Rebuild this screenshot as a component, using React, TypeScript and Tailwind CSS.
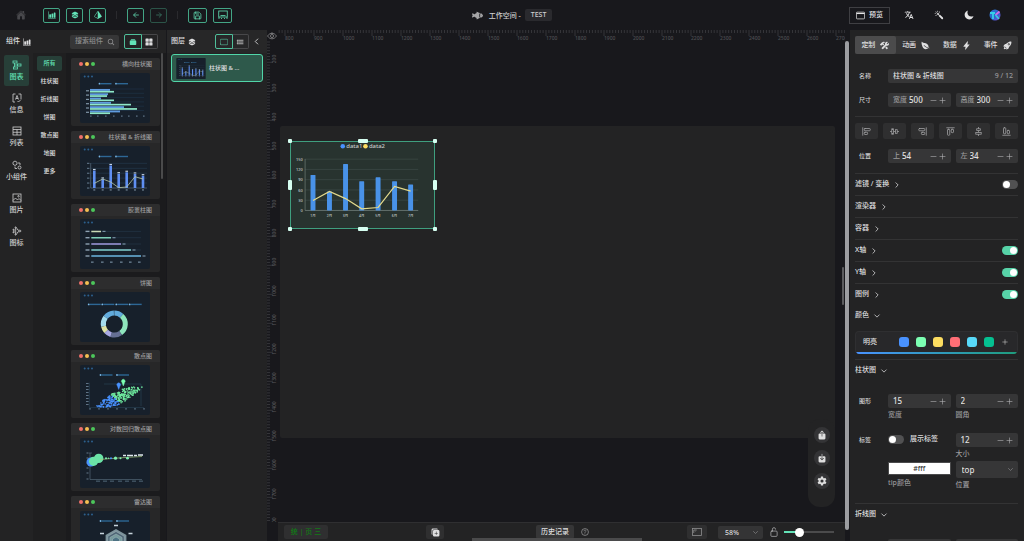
import React from "react";
import {
  IoHome, IoBarChart, IoLayers, IoPrism, IoArrowBack, IoArrowForward, IoFish, IoLanguage,
  IoColorWand, IoMoon, IoSearch, IoAlbums, IoGrid, IoTabletLandscapeOutline, IoList, IoChevronBack, IoChevronForward,
  IoChevronDown, IoConstruct, IoLeaf, IoFlash, IoRocket, IoShare, IoDownload, IoSettingsSharp, IoDuplicate,
  IoHelpCircleOutline, IoLockOpenOutline, IoAdd, IoRemove, IoEyeOutline,
} from "react-icons/io5";
import { AlignStartVertical, AlignEndVertical, AlignStartHorizontal, AlignEndHorizontal, Save } from "lucide-react";

/* ---------- shared pieces ---------- */

function Stroke({ children, size = 10 }: { children: React.ReactNode; size?: number }) {
  return (
    <svg width={size} height={size} viewBox="0 0 20 20" fill="none" stroke="currentColor" strokeWidth="1.6" aria-hidden="true">
      {children}
    </svg>
  );
}

function HeaderButton({ label, wide, dim, children }: { label: string; wide?: boolean; dim?: boolean; children: React.ReactNode }) {
  return (
    <button
      aria-label={label}
      className={`flex h-[15px] items-center justify-center rounded-[2px] border ${wide ? "w-[19px]" : "w-[17px]"} ${
        dim ? "border-[#2b5448] text-[#3b7866]" : "border-[#43a585] text-[#63e2b7]"
      }`}
    >
      {children}
    </button>
  );
}

function Switch({ label, on }: { label: string; on?: boolean }) {
  return (
    <input
      type="checkbox"
      role="switch"
      aria-label={label}
      defaultChecked={on}
      className="relative block h-[9px] w-4 shrink-0 appearance-none rounded-full bg-[#515152] before:absolute before:left-px before:top-px before:size-[7px] before:rounded-full before:bg-white checked:bg-[#57d3a8] checked:before:left-2"
    />
  );
}

function NumberField({ label, prefix, value }: { label: string; prefix?: string; value: string }) {
  return (
    <div className="flex h-[14px] min-w-0 items-center rounded-[2px] bg-[#363637] pl-[5px] pr-1">
      {prefix && <span className="mr-[2px] shrink-0 text-[#9a9a9b]">{prefix}</span>}
      <input aria-label={label} defaultValue={value} className="w-0 min-w-0 flex-1 bg-transparent text-[8px] text-[#e0e0e0] outline-none" />
      <button aria-label={`${label} -`} className="text-[#b8b8b9]"><IoRemove size={9} /></button>
      <button aria-label={`${label} +`} className="text-[#b8b8b9]"><IoAdd size={9} /></button>
    </div>
  );
}

/* ---------- header ---------- */

function Header() {
  return (
    <header className="grid h-[30px] shrink-0 grid-cols-[1fr_auto_1fr] items-center bg-[#18181c]">
      <div className="flex items-center pl-4">
        <button aria-label="主页" className="text-[#48484c]"><IoHome size={10} /></button>
        <div className="ml-[17px] flex gap-[6px]">
          <HeaderButton label="图表组件"><IoBarChart size={8} /></HeaderButton>
          <HeaderButton label="图层控制"><IoLayers size={8} /></HeaderButton>
          <HeaderButton label="详情设置"><IoPrism size={8} /></HeaderButton>
        </div>
        <span className="mx-[10px] h-2 w-px bg-[#2a2a2e]" />
        <div className="flex gap-[6px]">
          <HeaderButton label="后退"><IoArrowBack size={8} /></HeaderButton>
          <HeaderButton label="前进" dim><IoArrowForward size={8} /></HeaderButton>
        </div>
        <span className="mx-[10px] h-2 w-px bg-[#2a2a2e]" />
        <div className="flex gap-[6px]">
          <HeaderButton label="保存" wide><Save size={9} strokeWidth={2} /></HeaderButton>
          <HeaderButton label="大屏" wide>
            <Stroke>
              <rect x="1.5" y="2" width="17" height="12" />
              <path d="M2 14v4M6 17h2M12 17h2M18 14v4M5 11h10" />
            </Stroke>
          </HeaderButton>
        </div>
      </div>
      <div className="flex items-center text-[7px] leading-[11px] text-[#d0d0d1]">
        <IoFish size={11} className="mr-[6px] text-[#a5a5a7]" />
        <span>工作空间 -</span>
        <button className="ml-1 h-[12px] rounded-[2px] bg-[#2a2a2e] px-[6px] text-[7px] leading-[12px]">TEST</button>
      </div>
      <div className="flex items-center justify-end pr-[23px] text-[#e4e4e5]">
        <button className="mr-[14px] flex h-[17px] items-center gap-1 border border-[#3f3f43] px-[6px] text-[7px]">
          <Stroke size={9}><rect x="1" y="2.5" width="18" height="15" rx="1.5" /><path d="M1 5.5h18" strokeWidth="2.5" /></Stroke>
          预览
        </button>
        <div className="mr-[15px] flex items-center gap-5">
          <button aria-label="语言"><IoLanguage size={10} /></button>
          <button aria-label="主题"><IoColorWand size={10} /></button>
          <button aria-label="深色"><IoMoon size={10} /></button>
        </div>
        <button aria-label="用户">
          <svg width="12" height="12" viewBox="0 0 24 24">
            <defs>
              <linearGradient id="avatar" x1="0" y1="0" x2="1" y2="1">
                <stop offset="0" stopColor="#2f7de0" /><stop offset=".55" stopColor="#2a62c9" /><stop offset="1" stopColor="#8a4de0" />
              </linearGradient>
            </defs>
            <circle cx="12" cy="12" r="11" fill="url(#avatar)" />
            <path d="M2 8h10M8 8v12" stroke="#35d0e8" strokeWidth="3.6" fill="none" />
            <path d="M21 5l-8 7" stroke="#d26be8" strokeWidth="3.6" />
            <path d="M13 12l7 8" stroke="#3bc7e6" strokeWidth="3.6" />
          </svg>
        </button>
      </div>
    </header>
  );
}

/* ---------- chart thumbnails ---------- */

function Dashes({ xs, y, w = 11 }: { xs: number[]; y: number; w?: number }) {
  return (
    <g>
      {xs.map((x) => (
        <g key={x}>
          <rect x={x + 1} y={y - 0.7} width={w} height="1.4" fill="#2d6795" />
          <circle cx={x} cy={y} r="0.9" fill="#79b8e8" />
        </g>
      ))}
    </g>
  );
}

const comboX = [14.3, 22.7, 30.7, 38.7, 46.7, 55, 63];
const comboTop = [24.5, 33, 19.5, 27.7, 26.3, 28, 29.7];
const comboLine = [37.3, 33, 36, 41.7, 41, 30.7, 33];

function arc(from: number, to: number) {
  const p = (a: number) => {
    const r = ((a - 90) * Math.PI) / 180;
    return `${(34.3 + 11 * Math.cos(r)).toFixed(2)} ${(32 + 11 * Math.sin(r)).toFixed(2)}`;
  };
  return `M${p(from)}A11 11 0 0 1 ${p(to)}`;
}

const donut: [number, number, string][] = [
  [0, 42, "#62abdc"], [42, 145, "#8fe6bd"], [145, 197, "#656f93"], [197, 228, "#a9a9e3"],
  [228, 258, "#dfe3a4"], [258, 308, "#a5dcec"], [308, 358, "#62abdc"],
];

const cloud = Array.from({ length: 260 }, (_, i) => {
  const t = ((i * 73) % 260) / 260;
  const s = Math.sin(i * 12.9898) * 43758.5453;
  const n = s - Math.floor(s);
  const s2 = Math.sin(i * 78.233) * 12543.123;
  const m = s2 - Math.floor(s2);
  const c = t * 0.5 + m * 0.5;
  return { x: 14 + c * 49, y: 43 - c * 21 + (n - 0.5) * 14 * Math.sin(Math.PI * c), blue: c < 0.44 + (n - 0.5) * 0.2 };
}).filter((p) => p.y < 42);

const hexagon = (r: number) =>
  Array.from({ length: 6 }, (_, i) => `${(36 + r * Math.sin((i * Math.PI) / 3)).toFixed(1)},${(30 - r * Math.cos((i * Math.PI) / 3)).toFixed(1)}`).join(" ");

function Plot({ kind }: { kind: string }) {
  switch (kind) {
    case "hbar":
      return (
        <g>
          <Dashes xs={[19.5, 36]} y={10.7} />
          {[16, 20.3, 24.6, 28.9, 33.2, 37.5].map((y, i) => (
            <g key={y}>
              <path d={`M10 ${y}H64`} stroke="#24405a" strokeWidth=".4" />
              <rect x="6" y={y + 1.2} width="3" height="1.2" fill="#8096a8" />
              <rect x="10" y={y} width={[20, 18, 11, 21, 34, 30][i]} height="1.9" fill="#5f9be0" />
              <rect x="10" y={y + 1.9} width={[24, 17, 24, 41, 47, 20][i]} height="1.7" fill="#8ee8c8" />
            </g>
          ))}
          {[10, 17, 25, 33, 41, 48, 56, 63].map((x) => <rect key={x} x={x} y="42.5" width="1.6" height="1.2" fill="#5f7487" />)}
        </g>
      );
    case "combo":
      return (
        <g>
          <Dashes xs={[19.5, 36]} y={10.5} />
          {[17.3, 22.3, 27.2, 32.1, 37].map((y) => <path key={y} d={`M10.7 ${y}H67`} stroke="#2a4258" strokeWidth=".5" />)}
          {[17.3, 22.3, 27.2, 32.1, 37, 42].map((y) => <rect key={y} x="7" y={y - 0.5} width="2.4" height="1.1" fill="#5f7487" />)}
          <path d="M10.7 17V42H67" stroke="#65798b" strokeWidth=".6" fill="none" />
          {comboX.map((x, i) => (
            <g key={x}>
              <rect x={x - 1.3} y={comboTop[i]} width="2.6" height={42 - comboTop[i]} fill="#5f8ff2" />
              <rect x={x - 1.3} y={comboTop[i] - 1.6} width="2.6" height="1.1" fill="#c6d4e4" />
              <rect x={x - 1} y="43.4" width="2" height="1.1" fill="#7b8d9d" />
            </g>
          ))}
          <polyline points={comboX.map((x, i) => `${x},${comboLine[i]}`).join(" ")} fill="none" stroke="#b9c9a8" strokeWidth=".8" />
        </g>
      );
    case "capsule":
      return (
        <g>
          {[12.4, 18.7, 25, 31, 37].map((y, i) => (
            <g key={y}>
              <rect x="5.5" y={y - 0.7} width="4" height="1.4" fill="#8ea2b3" />
              <path d={`M11.3 ${y}H61`} stroke="#26394c" strokeWidth=".6" />
              <path d={`M11.3 ${y}H${21 + i * 10}`} stroke={["#c9d9b4", "#7fcfb8", "#9f98dc", "#82cfcd", "#6bb4dc"][i]} strokeWidth="1.5" />
              <rect x={22.5 + i * 10} y={y - 0.6} width="3" height="1.2" fill="#7890a4" />
            </g>
          ))}
          {[11, 21, 30, 40, 49, 58].map((x) => <rect key={x} x={x} y="42.5" width="2.6" height="1.3" fill="#6d8294" />)}
        </g>
      );
    case "pie":
      return (
        <g>
          <Dashes xs={[8.7, 22.3, 36.3, 49.7]} y={12.4} />
          {donut.map(([a, b, c]) => <path key={a} d={arc(a, b)} stroke={c} strokeWidth="5" fill="none" />)}
        </g>
      );
    case "scatter":
      return (
        <g>
          <Dashes xs={[20.5, 37]} y={10} />
          <path d="M9.3 17.6V42.6H64M24 19H61V41" stroke="#2f4c63" strokeWidth=".5" fill="none" />
          {[18, 21, 24, 27, 30, 33, 36, 39].map((y) => <rect key={y} x="6" y={y} width="2.6" height="1" fill="#5f7487" />)}
          {[9, 18, 27, 36, 45, 54, 63].map((x) => <rect key={x} x={x} y="43.4" width="2" height="1" fill="#5f7487" />)}
          {cloud.map((p, i) => <circle key={i} cx={p.x} cy={p.y} r=".8" fill={p.blue ? "#4992ff" : "#6fea9f"} />)}
          <path d="M43.3 21l-1.3-3.4a1.9 1.9 0 1 1 2.6 0z" fill="#7cffb2" stroke="#7cffb2" strokeWidth=".4" />
          <path d="M38.7 24.5l-1.3-3.4a1.9 1.9 0 1 1 2.6 0z" fill="#4992ff" stroke="#4992ff" strokeWidth=".4" />
        </g>
      );
    case "log":
      return (
        <g>
          <path d="M10 15V41.5H62M9 15h3" stroke="#5b7082" strokeWidth=".6" fill="none" />
          {[15, 20, 25, 30, 35, 41].map((y) => <rect key={y} x="6.5" y={y - 0.5} width="2" height="1" fill="#65798b" />)}
          {[16, 23, 30, 38, 45, 52, 59].map((x) => <rect key={x} x={x} y="42.6" width="4" height="1.1" fill="#4d6172" />)}
          <circle cx="11" cy="24" r="4.5" fill="#4992ff" />
          <circle cx="13.6" cy="23.3" r="4.6" fill="#6be3a6" />
          <circle cx="18.7" cy="20.4" r="4.7" fill="#6be3a6" />
          <path d="M20 21.5Q35 20 62 18.5" stroke="#a5c97c" strokeWidth=".7" fill="none" />
          {[26, 28.5, 31, 35.5, 40.5, 47.5].map((x, i) => <circle key={x} cx={x} cy="20.2" r={[1, 0.7, 1, 1.6, 1, 1.4][i]} fill={i === 2 ? "#4992ff" : "#7ff0b0"} />)}
          <path d="M43 17.5h3m1 0h6m1 0h3m1-.5h5" stroke="#dfe8ee" strokeWidth="1.5" />
        </g>
      );
    default:
      return (
        <g>
          <Dashes xs={[20.5, 37]} y={10} />
          <polygon points={hexagon(12)} fill="#7d939b" />
          <polygon points={hexagon(9.5)} fill="#4d6474" stroke="#a4b6bc" strokeWidth=".5" />
          <polygon points={hexagon(7)} fill="#769a9c" stroke="#a4b6bc" strokeWidth=".5" />
          <polygon points={hexagon(4)} fill="#4d7283" stroke="#a4b6bc" strokeWidth=".5" />
          <path d="M34 14.5h4M20 22.5h4M48.5 22.5h4" stroke="#c7d3dc" strokeWidth="1.3" />
        </g>
      );
  }
}

function Thumb({ kind }: { kind: string }) {
  return (
    <svg viewBox="0 0 70 50" className="block h-full w-full">
      <rect width="70" height="50" rx="2" fill="#17202b" />
      {[4.7, 8.3, 12].map((x) => <circle key={x} cx={x} cy="3.4" r="1" fill="#2c5f8c" />)}
      <Plot kind={kind} />
    </svg>
  );
}

/* ---------- component library ---------- */

const rail: { name: string; icon: React.ReactNode }[] = [
  { name: "图表", icon: <><rect x="2" y="2" width="8" height="4" /><rect x="11" y="8" width="7" height="4" /><rect x="3" y="14" width="8" height="4" /><path d="M5 6v8M5 10h6" /></> },
  { name: "信息", icon: <><path d="M7 2H2v16h4M13 2h5v10M7 13l3-8 3 8M8 11h4M11 16l2 2 5-5" /></> },
  { name: "列表", icon: <><rect x="2" y="2" width="16" height="16" /><path d="M2 7h16M2 12.5h16M10 7v11" /></> },
  { name: "小组件", icon: <><path d="M6 2l4 2.500v4L6 11 2 8.500v-4z" /><circle cx="15" cy="15" r="3" /><path d="M12 6h4v4M6 13v4h4" /></> },
  { name: "图片", icon: <><rect x="2" y="2" width="16" height="16" /><path d="M2 15l5-5 4 4 3-3 4 4" /><circle cx="13" cy="6.5" r="1.5" /></> },
  { name: "图标", icon: <path d="M18 10c0-1-1-1.500-2-1.500h-4L8 2H6l2 6.500H5L3 6H2l1 4-1 4h1l2-2.500h3L6 18h2l4-6.500h4c1 0 2-.5 2-1.500z" /> },
];
const groups = ["所有", "柱状图", "折线图", "饼图", "散点图", "地图", "更多"];
const cards = [
  ["横向柱状图", "hbar"], ["柱状图 & 折线图", "combo"], ["胶囊柱图", "capsule"], ["饼图", "pie"],
  ["散点图", "scatter"], ["对数回归散点图", "log"], ["雷达图", "radar"],
];

function Library() {
  return (
    <aside className="flex w-[167px] shrink-0 flex-col border-r border-[#18181c] bg-[#232324]">
      <div className="flex h-[23px] shrink-0 items-center pl-[6px] pr-2 text-[7px]">
        <h2 className="flex items-center gap-[3px]">组件 <IoBarChart size={8} /></h2>
        <label className="ml-auto flex h-[14px] w-[49px] items-center rounded-[2px] bg-[#363637] pl-[5px] pr-1 text-[#8b8b8c]">
          <input aria-label="搜索组件" placeholder="搜索组件" className="w-0 flex-1 bg-transparent outline-none placeholder:text-[#8b8b8c]" />
          <IoSearch size={8} />
        </label>
        <div className="ml-[5px] flex h-[15px] w-[34px]">
          <button aria-label="卡片" className="flex flex-1 items-center justify-center rounded-l-[2px] border border-[#4fbf9a] text-[#63e2b7]"><IoAlbums size={8} /></button>
          <button aria-label="网格" className="flex flex-1 items-center justify-center rounded-r-[2px] border border-l-0 border-[#48484a]"><IoGrid size={8} /></button>
        </div>
      </div>
      <div className="flex min-h-0 flex-1">
        <nav className="w-[33px] shrink-0 pl-1 pt-[2px]">
          <div className="flex h-[198px] flex-col justify-between text-[7px] leading-[10px]">
            {rail.map((r, i) => (
              <a key={r.name} href="#" className={`flex h-[31px] w-[25px] flex-col items-center justify-center gap-[2px] whitespace-nowrap rounded-[2px] ${i === 0 ? "bg-[#273f38] text-[#63e2b7]" : "text-[#cfcfd0]"}`}>
                <Stroke>{r.icon}</Stroke>
                {r.name}
              </a>
            ))}
          </div>
        </nav>
        <nav className="flex w-[33px] shrink-0 flex-col items-center gap-[3px] bg-[#1f1f20] pt-[3px] text-[6px]">
          {groups.map((g, i) => (
            <a key={g} href="#" className={`h-[15px] w-[25px] rounded-[2px] text-center leading-[15px] ${i === 0 ? "bg-[#273f38] text-[#63e2b7]" : "text-[#dcdcdd]"}`}>{g}</a>
          ))}
        </nav>
        <div className="relative flex min-w-0 flex-1 flex-col gap-[5px] overflow-hidden bg-[#1b1b1d] pl-[5px] pr-[6px] pt-[5px]">
          {cards.map(([name, kind]) => (
            <article key={name} className="h-[68px] shrink-0 overflow-hidden rounded-[2px] bg-[#272728]">
              <div className="flex h-3 items-center gap-[2px] bg-[#2d2d2e] pl-2 pr-2">
                <i className="size-1 rounded-full bg-[#f0706a]" />
                <i className="size-1 rounded-full bg-[#f5bf52]" />
                <i className="size-1 rounded-full bg-[#4cc65a]" />
                <h3 className="ml-auto text-[6px] leading-[12px] text-[#9c9c9d]">{name}</h3>
              </div>
              <div className="ml-[9px] mt-[3px] h-[50px] w-[70px]"><Thumb kind={kind} /></div>
            </article>
          ))}
          <i className="absolute right-[3px] top-0 h-[126px] w-[2px] rounded-full bg-[#4a4a4b]" />
        </div>
      </div>
    </aside>
  );
}

function Layers() {
  return (
    <aside className="flex w-[100px] shrink-0 flex-col bg-[#232324]">
      <div className="flex h-[23px] shrink-0 items-center bg-[#272728] pl-1 pr-[6px] text-[7px]">
        <h2 className="flex items-center gap-[3px]">图层 <IoLayers size={8} /></h2>
        <div className="ml-auto flex h-[15px] w-[34px]">
          <button aria-label="缩略图" className="flex flex-1 items-center justify-center rounded-l-[2px] border border-[#4fbf9a] text-[#63e2b7]"><IoTabletLandscapeOutline size={8} /></button>
          <button aria-label="列表" className="flex flex-1 items-center justify-center rounded-r-[2px] border border-l-0 border-[#48484a]"><IoList size={8} /></button>
        </div>
        <button aria-label="收起" className="ml-[3px]"><IoChevronBack size={9} /></button>
      </div>
      <button className="mx-1 mt-px flex h-[28px] items-center gap-[3px] rounded-[3px] border border-[#51d6a9] bg-[#2e594b] pl-1 text-[6px]">
        <span className="h-[21px] w-[30px]"><Thumb kind="combo" /></span>
        柱状图 &amp; …
      </button>
    </aside>
  );
}

/* ---------- canvas ---------- */

function RulerX() {
  return (
    <svg className="absolute left-[11px] top-0 h-3 w-full" aria-hidden="true">
      {Array.from({ length: 230 }, (_, i) => (
        <path key={i} d={`M${(1.2 + i * 2.9).toFixed(1)} 0v${i % 10 === 2 ? 6 : 3}`} stroke="#3d3d41" strokeWidth=".8" />
      ))}
      {Array.from({ length: 20 }, (_, i) => (
        <text key={i} x={7 + i * 29} y="10" fontSize="5" fill="#4e4e52">{800 + i * 100}</text>
      ))}
    </svg>
  );
}

function RulerY() {
  return (
    <svg className="absolute left-0 top-[11px] h-full w-3" aria-hidden="true">
      {Array.from({ length: 190 }, (_, i) => (
        <path key={i} d={`M0 ${(1 + i * 2.9).toFixed(1)}h${i % 10 === 7 ? 6 : 3}`} stroke="#3d3d41" strokeWidth=".8" />
      ))}
      {Array.from({ length: 17 }, (_, i) => (
        <text key={i} transform={`translate(9 ${18 + i * 29}) rotate(-90)`} textAnchor="middle" fontSize="5" fill="#56565a">{200 + i * 100}</text>
      ))}
    </svg>
  );
}

const barX = [22.3, 39, 55.3, 71.7, 88.3, 105, 121.3];
const barTop = [33.3, 50, 22.3, 39.7, 35.7, 39.7, 43];
const lineY = [59.3, 50, 57.3, 67.7, 66.3, 45, 49.7];

function ChartWidget() {
  return (
    <div className="absolute left-[23px] top-[111px] h-[88px] w-[145px] border border-[#3f9f7f] bg-[#28332f]">
      <svg viewBox="0 0 145 87" className="block h-full w-full">
        {[0, 1, 2, 3, 4, 5].map((i) => (
          <g key={i}>
            <path d={`M14.3 ${17.3 + i * 10.4}H129`} stroke={i === 5 ? "#8b9a95" : "#43504c"} strokeWidth=".6" />
            <text x="12" y={19 + i * 10.4} textAnchor="end" fontSize="4" fill="#c5cbc9">{150 - i * 30}</text>
          </g>
        ))}
        <path d="M14.3 17V69.3" stroke="#7b8a85" strokeWidth=".6" />
        {barX.map((x, i) => (
          <g key={x}>
            <rect x={x - 2.5} y={barTop[i]} width="5" height={69.3 - barTop[i]} rx=".6" fill="#4992e8" />
            <text x={x} y="75.5" textAnchor="middle" fontSize="3.5" fill="#c5cbc9">{i + 1}月</text>
          </g>
        ))}
        <polyline points={barX.map((x, i) => `${x},${lineY[i]}`).join(" ")} fill="none" stroke="#e3d98c" strokeWidth="1.2" />
        <circle cx="52.5" cy="4.3" r="2.3" fill="#4992ff" />
        <text x="56" y="6.4" fontSize="6" fill="#c5cbc9">data1</text>
        <circle cx="75.5" cy="4.3" r="2.3" fill="#fddd60" />
        <text x="79" y="6.4" fontSize="6" fill="#c5cbc9">data2</text>
      </svg>
      <i className="absolute -left-[3px] -top-[3px] size-1 rounded-[1px] bg-[#d6fff1]" />
      <i className="absolute -right-[3px] -top-[3px] size-1 rounded-[1px] bg-[#d6fff1]" />
      <i className="absolute -bottom-[3px] -left-[3px] size-1 rounded-[1px] bg-[#d6fff1]" />
      <i className="absolute -bottom-[3px] -right-[3px] size-1 rounded-[1px] bg-[#d6fff1]" />
      <i className="absolute -top-[3px] left-[67px] h-1 w-[10px] rounded-[1px] bg-[#d6fff1]" />
      <i className="absolute -bottom-[3px] left-[67px] h-1 w-[10px] rounded-[1px] bg-[#d6fff1]" />
      <i className="absolute -left-[3px] top-[38px] h-[10px] w-1 rounded-[1px] bg-[#d6fff1]" />
      <i className="absolute -right-[3px] top-[38px] h-[10px] w-1 rounded-[1px] bg-[#d6fff1]" />
    </div>
  );
}

function Workspace() {
  return (
    <main className="flex min-w-0 flex-1 bg-[#18181c]">
      <div className="relative flex min-w-0 flex-1 flex-col overflow-hidden">
        <div className="relative min-h-0 flex-1 overflow-hidden">
          <RulerX />
          <RulerY />
          <IoEyeOutline size={10} className="absolute left-0 top-px bg-[#18181c] text-[#a8a8aa]" />
          <div className="absolute left-[13px] right-[10px] top-24 h-[312px] rounded-[2px] bg-[#232324]" />
          <ChartWidget />
          <div className="absolute bottom-[15px] right-[10px] flex w-[27px] flex-col items-center gap-[7px] rounded-[12px] bg-[#232324] pb-[18px] pt-2 text-[#dedede]">
            <button aria-label="导出" className="flex size-4 items-center justify-center rounded-full bg-[#343436]"><IoShare size={10} /></button>
            <button aria-label="导入" className="flex size-4 items-center justify-center rounded-full bg-[#343436]"><IoDownload size={10} /></button>
            <button aria-label="设置" className="flex size-4 items-center justify-center rounded-full bg-[#343436]"><IoSettingsSharp size={10} /></button>
          </div>
          <i className="absolute right-px top-[237px] h-[38px] w-[2px] rounded-full bg-[#5b5b5e]" />
        </div>
        <footer className="relative ml-[11px] flex h-[19px] shrink-0 items-center border-t border-[#2f2f31] bg-[#232324] pl-[6px] pr-[11px] text-[7px]">
          <div className="flex flex-[11] items-center justify-between">
            <button className="h-[14px] w-11 rounded-[2px] bg-[#2f2f30] text-[#117a16]">统 | 页 三</button>
            <button aria-label="复制" className="mr-[92px] flex h-[14px] w-[18px] items-center justify-center rounded-[2px] bg-[#2f2f30]"><IoDuplicate size={9} /></button>
          </div>
          <div className="flex flex-[13] items-center">
            <button className="h-[14px] whitespace-nowrap rounded-[2px] bg-[#363637] px-[5px]">历史记录</button>
            <IoHelpCircleOutline size={10} className="ml-[6px] text-[#a9a9aa]" />
            <button aria-label="快捷键" className="ml-auto flex h-[14px] w-5 items-center justify-center rounded-[2px] bg-[#2f2f30] text-[#8d8d8e]">
              <Stroke><rect x="1" y="3" width="18" height="14" /><path d="M3.5 12V6h6M6 8.5h1" /></Stroke>
            </button>
            <div className="relative ml-[11px]">
              <select aria-label="缩放" className="block h-[13px] w-[45px] appearance-none rounded-[2px] bg-[#343435] pl-[7px] text-[7px] leading-[13px] text-[#dcdcdd]"><option>58%</option></select>
              <IoChevronDown size={7} className="pointer-events-none absolute right-1 top-[3px] text-[#8d8d8e]" />
            </div>
            <button aria-label="锁定缩放" className="ml-[6px] text-[#c9c9ca]"><IoLockOpenOutline size={10} /></button>
            <input
              type="range"
              aria-label="缩放比例"
              defaultValue={26}
              className="ml-[5px] h-[9px] w-[50px] appearance-none bg-[linear-gradient(90deg,#63e2b7_30%,#4b4b4c_30%)] bg-[length:100%_2px] bg-center bg-no-repeat [&::-webkit-slider-thumb]:size-[9px] [&::-webkit-slider-thumb]:appearance-none [&::-webkit-slider-thumb]:rounded-full [&::-webkit-slider-thumb]:bg-white"
            />
          </div>
          <i className="absolute bottom-0 left-[194px] h-[3px] w-[170px] bg-[#4a4a4b]" />
        </footer>
      </div>
      <div className="w-1 shrink-0 pb-[11px] pt-[11px]"><div className="h-full rounded-full bg-[#9c9da1]" /></div>
    </main>
  );
}

/* ---------- settings ---------- */

const tabs: [string, React.ReactNode][] = [
  ["定制", <IoConstruct size={9} />], ["动画", <IoLeaf size={9} />], ["数据", <IoFlash size={9} />], ["事件", <IoRocket size={9} />],
];
const aligns: [string, React.ReactNode][] = [
  ["左对齐", <AlignStartVertical size={9} />],
  ["水平居中", <Stroke size={9}><rect x="4" y="4" width="4" height="12" /><rect x="12" y="6" width="4" height="8" /><path d="M0 10h4M8 10h4M16 10h4" /></Stroke>],
  ["右对齐", <AlignEndVertical size={9} />],
  ["顶部对齐", <AlignStartHorizontal size={9} />],
  ["垂直居中", <Stroke size={9}><rect x="6" y="4" width="8" height="4" /><rect x="4" y="12" width="12" height="4" /><path d="M10 0v4M10 8v4M10 16v4" /></Stroke>],
  ["底部对齐", <AlignEndHorizontal size={9} />],
];
const sections: { name: string; state?: "on" | "off"; open?: boolean }[] = [
  { name: "滤镜 / 变换", state: "off" }, { name: "渲染器" }, { name: "容器" }, { name: "X轴", state: "on" },
  { name: "Y轴", state: "on" }, { name: "图例", state: "on" }, { name: "颜色", open: true },
];

function Row({ label, children }: { label: string; children: React.ReactNode }) {
  return (
    <div className="grid grid-cols-[28px_1fr_1fr] gap-x-[5px]">
      <span className="pl-1 text-[6px] leading-[14px] text-[#d0d0d1]">{label}</span>
      {children}
    </div>
  );
}

function Field({ caption, children }: { caption: string; children: React.ReactNode }) {
  return (
    <div className="flex min-w-0 flex-col gap-px">
      {children}
      <span className="leading-[11px] text-[#98989a]">{caption}</span>
    </div>
  );
}

function Settings() {
  return (
    <aside className="flex w-[175px] shrink-0 flex-col overflow-hidden border-l border-[#18181c] bg-[#232324] pl-[5px] pr-[6px] pt-[6px] text-[7px]">
      <div role="tablist" className="flex h-[18px] shrink-0 rounded-[2px] bg-[#353536]">
        {tabs.map(([name, icon], i) => (
          <button key={name} role="tab" aria-selected={i === 0} className={`flex flex-1 items-center justify-center gap-[5px] rounded-[2px] ${i === 0 ? "bg-[#4b4b4c]" : ""}`}>
            {name} {icon}
          </button>
        ))}
      </div>
      <div className="mt-[15px] flex flex-col gap-[10px]">
        <Row label="名称">
          <label className="col-span-2 flex h-[14px] items-center rounded-[2px] bg-[#363637] px-[5px]">
            <input aria-label="名称" defaultValue="柱状图 & 折线图" className="min-w-0 flex-1 bg-transparent outline-none" />
            <span className="text-[#98989a]">9 / 12</span>
          </label>
        </Row>
        <Row label="尺寸">
          <NumberField label="宽度" prefix="宽度" value="500" />
          <NumberField label="高度" prefix="高度" value="300" />
        </Row>
      </div>
      <hr className="mt-[9px] border-[#333334]" />
      <div className="mt-[6px] flex justify-between">
        {aligns.map(([name, icon]) => (
          <button key={name} aria-label={name} className="flex h-4 w-[23px] items-center justify-center rounded-[2px] bg-[#2f2f30] text-[#a8a8aa]">{icon}</button>
        ))}
      </div>
      <div className="mt-[10px]">
        <Row label="位置">
          <NumberField label="上" prefix="上" value="54" />
          <NumberField label="左" prefix="左" value="34" />
        </Row>
      </div>
      <hr className="mt-[10px] border-[#333334]" />
      <div className="flex h-[152px] shrink-0 flex-col">
        {sections.map((s, i) => (
          <div key={s.name} className={`flex flex-1 items-center justify-between ${i < 5 ? "border-b border-[#333334]" : ""}`}>
            <button className="flex items-center gap-1">
              {s.name} {s.open ? <IoChevronDown size={8} /> : <IoChevronForward size={8} />}
            </button>
            {s.state && <Switch label={s.name} on={s.state === "on"} />}
          </div>
        ))}
      </div>
      <div className="mt-[5px] flex h-[23px] shrink-0 flex-col overflow-hidden rounded-[4px] border border-b-0 border-[#2f2f31] bg-[#28282a]">
        <div className="flex flex-1 items-center pl-[7px] pr-2">
          <span className="mr-auto">明亮</span>
          <div className="flex gap-[7px]">
            <i className="size-[10px] rounded-[3px] bg-[#4992ff]" />
            <i className="size-[10px] rounded-[3px] bg-[#7cffb2]" />
            <i className="size-[10px] rounded-[3px] bg-[#fddd60]" />
            <i className="size-[10px] rounded-[3px] bg-[#ff6e76]" />
            <i className="size-[10px] rounded-[3px] bg-[#58d9f9]" />
            <i className="size-[10px] rounded-[3px] bg-[#05c091]" />
          </div>
          <button aria-label="添加颜色" className="ml-[7px]"><IoAdd size={8} /></button>
        </div>
        <div className="h-[2px] bg-linear-to-r from-[#4992ff] to-[#1f9c7c]" />
      </div>
      <hr className="mt-[5px] border-[#333334]" />
      <button className="flex h-[21px] shrink-0 items-center gap-1">柱状图 <IoChevronDown size={8} /></button>
      <div className="mt-[13px] flex flex-col gap-[13px]">
        <Row label="图形">
          <Field caption="宽度"><NumberField label="图形宽度" value="15" /></Field>
          <Field caption="圆角"><NumberField label="圆角" value="2" /></Field>
        </Row>
        <Row label="标签">
          <div className="flex min-w-0 flex-col">
            <label className="flex h-[13px] items-center gap-[6px] whitespace-nowrap"><Switch label="展示标签" /> 展示标签</label>
            <input aria-label="tip颜色" defaultValue="#fff" className="mt-4 h-[13px] w-full border border-[#4b4b4c] bg-white text-center text-[7px] text-[#333]" />
            <span className="mt-[2px] leading-[11px] text-[#98989a]">tip颜色</span>
          </div>
          <div className="flex min-w-0 flex-col gap-[2px]">
            <Field caption="大小"><NumberField label="大小" value="12" /></Field>
            <Field caption="位置">
              <div className="relative">
                <select aria-label="标签位置" className="block h-[17px] w-full appearance-none rounded-[2px] bg-[#363637] pl-[6px] text-[8px]"><option>top</option></select>
                <IoChevronDown size={7} className="pointer-events-none absolute right-1 top-[5px] text-[#8d8d8e]" />
              </div>
            </Field>
          </div>
        </Row>
      </div>
      <hr className="mt-[13px] border-[#333334]" />
      <button className="flex h-[21px] shrink-0 items-center gap-1">折线图 <IoChevronDown size={8} /></button>
      <div className="mt-[14px] grid grid-cols-[28px_1fr_1fr] gap-x-[5px]">
        <span />
        <div className="h-[14px] rounded-[2px] bg-[#363637]" />
        <div className="h-[14px] rounded-[2px] bg-[#363637]" />
      </div>
    </aside>
  );
}

export default function App() {
  return (
    <div lang="zh-CN" className="flex h-screen flex-col overflow-hidden bg-[#18181c] font-['Noto_Sans','Noto_Sans_CJK_SC',sans-serif] font-medium text-[#dededf]">
      <Header />
      <div className="flex min-h-0 flex-1">
        <Library />
        <Layers />
        <Workspace />
        <Settings />
      </div>
    </div>
  );
}
